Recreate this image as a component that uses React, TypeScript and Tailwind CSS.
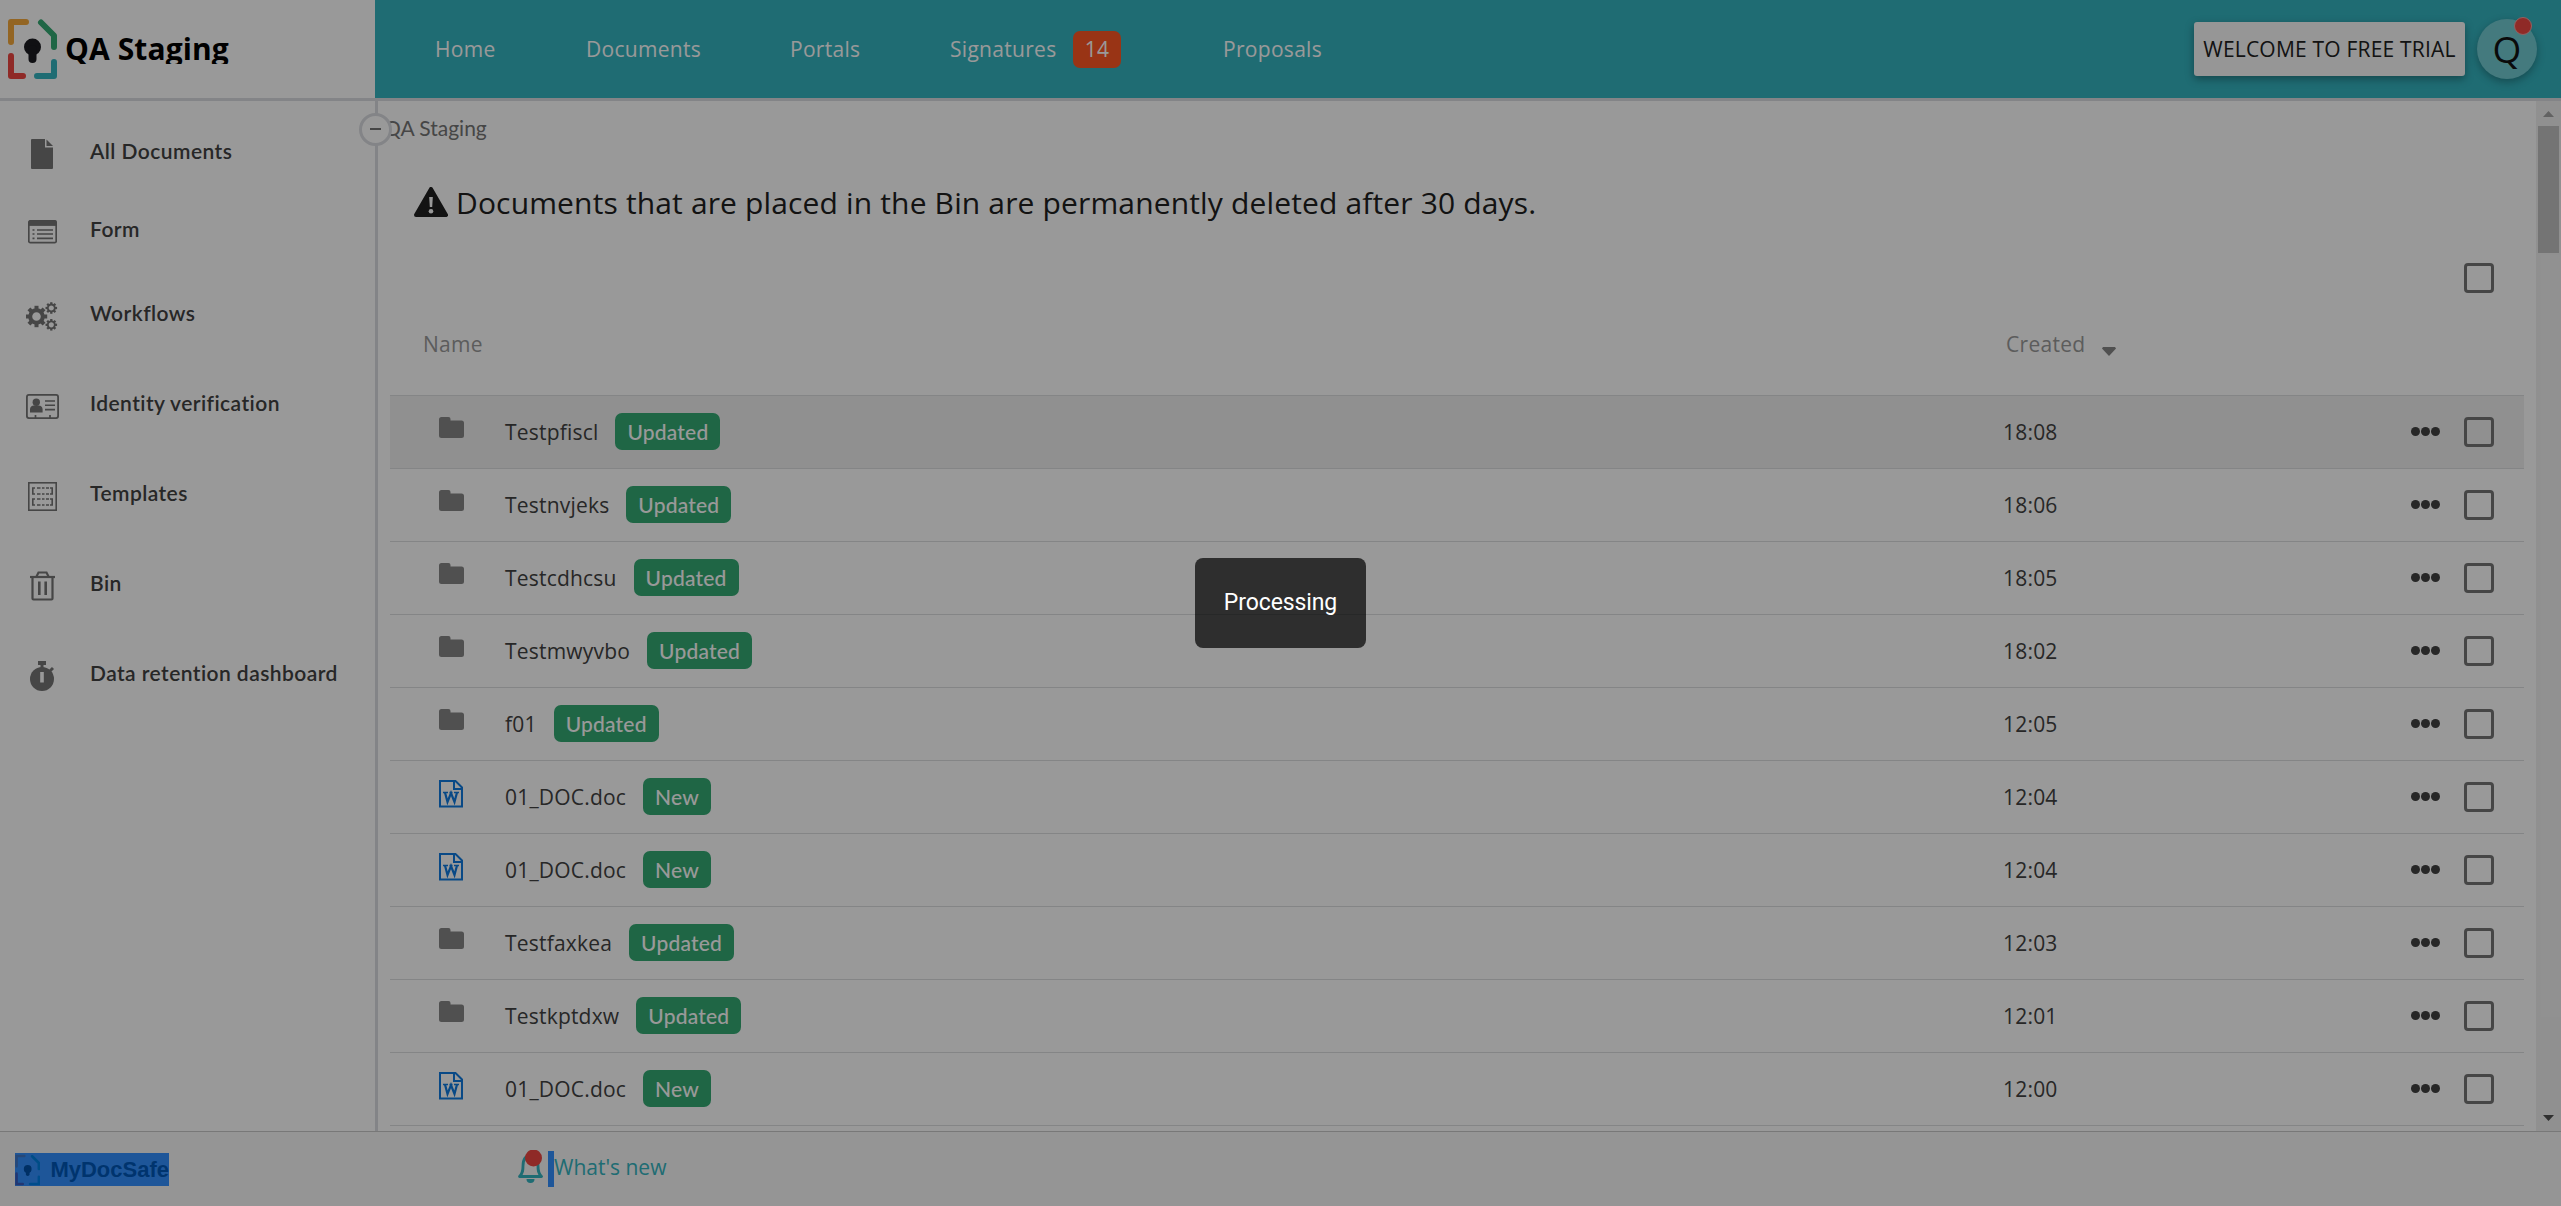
import type { ReactNode } from "react";

type Row = { kind: "folder" | "word"; name: string; tag: "Updated" | "New"; time: string };

const rows: Row[] = [
  { kind: "folder", name: "Testpfiscl", tag: "Updated", time: "18:08" },
  { kind: "folder", name: "Testnvjeks", tag: "Updated", time: "18:06" },
  { kind: "folder", name: "Testcdhcsu", tag: "Updated", time: "18:05" },
  { kind: "folder", name: "Testmwyvbo", tag: "Updated", time: "18:02" },
  { kind: "folder", name: "f01", tag: "Updated", time: "12:05" },
  { kind: "word", name: "01_DOC.doc", tag: "New", time: "12:04" },
  { kind: "word", name: "01_DOC.doc", tag: "New", time: "12:04" },
  { kind: "folder", name: "Testfaxkea", tag: "Updated", time: "12:03" },
  { kind: "folder", name: "Testkptdxw", tag: "Updated", time: "12:01" },
  { kind: "word", name: "01_DOC.doc", tag: "New", time: "12:00" },
];

function BrandMark({ className }: { className: string }) {
  return (
    <svg viewBox="0 0 49 60" className={className} fill="none" strokeWidth="6" strokeLinecap="round" strokeLinejoin="round">
      <path d="M3 23V3H18" stroke="#f5a93b" />
      <path d="M33 3.500L46 16.500V28" stroke="#34aa73" />
      <path d="M46 43V57H29" stroke="#34b4c0" />
      <path d="M3 37V57H15" stroke="#ee4641" />
      <circle cx="24.500" cy="28" r="8.500" fill="#1b1b20" />
      <path d="M24.500 30V40" stroke="#1b1b20" strokeWidth="8" />
    </svg>
  );
}

function FileIcon() {
  return (
    <svg viewBox="0 0 22 30" className="h-[30px] w-[22px]" fill="#757575">
      <path d="M1 0H14V8.500H22V29a1 1 0 0 1-1 1H1a1 1 0 0 1-1-1V1A1 1 0 0 1 1 0Z" />
      <path d="M15.500 0.500L22 7H15.500Z" />
    </svg>
  );
}

function FormIcon() {
  return (
    <svg viewBox="0 0 29 24" className="h-6 w-[29px]" fill="none" stroke="#757575">
      <rect x="0.800" y="0.800" width="27.400" height="21.900" rx="1.500" strokeWidth="1.700" />
      <path d="M1 3.400H28" strokeWidth="5" />
      <path d="M9 10H25M9 14H25M9 18.300H25" strokeWidth="1.700" />
      <path d="M4.500 10H6.500M4.500 14H6.500M4.500 18.300H6.500" strokeWidth="1.700" />
    </svg>
  );
}

function Gear({ cx, cy, r, teeth, hole, tooth }: { cx: number; cy: number; r: number; teeth: number; hole: number; tooth: number }) {
  return (
    <g transform={`translate(${cx} ${cy})`}>
      <circle r={(r + hole) / 2} fill="none" stroke="#757575" strokeWidth={r - hole} />
      {Array.from({ length: teeth }, (_, i) => (
        <rect key={i} x={-tooth / 2} y={-r - tooth * 0.6} width={tooth} height={tooth} fill="#757575" transform={`rotate(${(360 / teeth) * i})`} />
      ))}
    </g>
  );
}

function GearsIcon() {
  return (
    <svg viewBox="0 0 32 29" className="h-[29px] w-8">
      <Gear cx={10.500} cy={14.500} r={8.300} teeth={8} hole={4.300} tooth={4} />
      <Gear cx={25.300} cy={6} r={4.400} teeth={8} hole={2.600} tooth={2.300} />
      <Gear cx={25.300} cy={22.800} r={4.400} teeth={8} hole={2.600} tooth={2.300} />
    </svg>
  );
}

function IdIcon() {
  return (
    <svg viewBox="0 0 33 25" className="h-[25px] w-[33px]" fill="none" stroke="#757575">
      <rect x="0.900" y="0.900" width="31.200" height="23.200" rx="2" strokeWidth="1.800" />
      <circle cx="10.300" cy="8.300" r="3.700" fill="#757575" stroke="none" />
      <path d="M4 18.500V15a4 4 0 0 1 4-3.500h4.600a4 4 0 0 1 4 3.500v3.500Z" fill="#757575" stroke="none" />
      <path d="M19 7H29M19 11.300H29M19 15.600H29" strokeWidth="1.600" />
      <path d="M9.500 21V24M24 21V24" strokeWidth="1.700" />
    </svg>
  );
}

function TemplateIcon() {
  return (
    <svg viewBox="0 0 29 29" className="size-[29px]" fill="none" stroke="#757575">
      <rect x="0.800" y="0.800" width="27.400" height="27.400" strokeWidth="1.600" />
      <path d="M7 6H4.800V12H7M22 6H24.200V12H22M7 17H4.800V23H7M22 17H24.200V23H22" strokeWidth="1.600" />
      <path d="M9 6H12.500M14 6H16.500M18 6H21M9 12H12.500M14 12H16.500M18 12H21M9 17H12.500M14 17H16.500M18 17H21M9 23H12.500M14 23H16.500M18 23H21" strokeWidth="1.500" />
    </svg>
  );
}

function BinIcon() {
  return (
    <svg viewBox="0 0 25 30" className="h-[30px] w-[25px]" fill="none" stroke="#757575" strokeWidth="2.200">
      <path d="M0 6H25" />
      <path d="M6.500 5.500L8.500 1.500H16.500L18.500 5.500" />
      <path d="M2.500 6V27.500a1 1 0 0 0 1 1H21.500a1 1 0 0 0 1-1V6" />
      <path d="M9.300 10.500V24M15.700 10.500V24" strokeWidth="2.600" />
    </svg>
  );
}

function TimerIcon() {
  return (
    <svg viewBox="0 0 24 30" className="h-[30px] w-6">
      <circle cx="12" cy="18" r="12" fill="#757575" />
      <path d="M8 0H16V4H13.500V8H10.500V4H8Z" fill="#757575" />
      <path d="M19 11L23 7" stroke="#757575" strokeWidth="3" />
      <rect x="10.200" y="11" width="3.600" height="10.500" fill="#fff" />
    </svg>
  );
}

const sidebar: { label: string; icon: ReactNode; size: string }[] = [
  { label: "All Documents", icon: <FileIcon />, size: "h-[78px]" },
  { label: "Form", icon: <FormIcon />, size: "h-[84px]" },
  { label: "Workflows", icon: <GearsIcon />, size: "h-[90px]" },
  { label: "Identity verification", icon: <IdIcon />, size: "h-[90px]" },
  { label: "Templates", icon: <TemplateIcon />, size: "h-[90px]" },
  { label: "Bin", icon: <BinIcon />, size: "h-[90px]" },
  { label: "Data retention dashboard", icon: <TimerIcon />, size: "h-[90px]" },
];

function FolderIcon() {
  return (
    <svg viewBox="0 0 25 21" className="h-[21px] w-[25px]" fill="#868686">
      <path d="M2.500 0H9.500a2 2 0 0 1 2 2V3.500H22.500a2.500 2.500 0 0 1 2.500 2.500V18.500a2.500 2.500 0 0 1-2.500 2.500H2.500A2.500 2.500 0 0 1 0 18.500V2.500A2.500 2.500 0 0 1 2.500 0Z" />
    </svg>
  );
}

function WordIcon() {
  return (
    <svg viewBox="0 0 24 28" className="mt-[3px] mr-px h-7 w-6" fill="none" stroke="#0f7be0" strokeWidth="2">
      <path d="M1 1H16.500L23 7.500V26.500H1Z" />
      <path d="M15 1V9H23" />
      <path d="M4 12.500H9M15 12.500H20M10.500 12.500H13.500" strokeWidth="1.500" />
      <path d="M6 12.500L8.500 22L12 13L15.500 22L18 12.500" strokeWidth="2.200" />
    </svg>
  );
}

function Checkbox() {
  return <span className="block size-[30px] shrink-0 rounded-[4px] border-[3px] border-[#757575]" />;
}

function NavItem({ children, className }: { children: ReactNode; className: string }) {
  return <a className={`block shrink-0 whitespace-nowrap ${className}`}>{children}</a>;
}

export default function App() {
  return (
    <div className="relative flex h-[1206px] w-[2561px] flex-col overflow-hidden bg-white font-['Open_Sans',sans-serif] text-[21px] leading-[30px]">
      <header className="flex h-[101px] shrink-0 border-b-[3px] border-[#dbdce1]">
        <div className="flex w-[375px] items-center pl-2">
          <BrandMark className="h-[60px] w-[49px]" />
          <div className="ml-[8px] h-[30px] overflow-hidden text-[30px] leading-[30px] font-bold tracking-[0.1px] text-black">QA Staging</div>
        </div>
        <nav className="flex flex-1 items-center bg-[#34b4c0] pr-6 tracking-[0.3px] text-white">
          <NavItem className="ml-[60px] w-[151px]">Home</NavItem>
          <NavItem className="w-[204px]">Documents</NavItem>
          <NavItem className="w-[160px]">Portals</NavItem>
          <NavItem className="w-[123px]">Signatures</NavItem>
          <span className="flex h-[37px] w-12 items-center justify-center rounded-[7px] bg-[#ff5823]">14</span>
          <NavItem className="ml-[102px]">Proposals</NavItem>
          <button className="ml-auto h-[54px] w-[271px] rounded-[3px] bg-[#fafafa] tracking-[0.2px] whitespace-nowrap text-[#212121] shadow-[0_3px_8px_rgba(0,0,0,0.35)]">
            WELCOME TO FREE TRIAL
          </button>
          <div className="relative ml-3 flex size-[60px] items-center justify-center rounded-full bg-[#72cbd2] text-[37px] text-[#111] shadow-[0_3px_8px_rgba(0,0,0,0.3)]">
            Q
            <span className="absolute -top-[2px] right-[5px] size-[18px] rounded-full border border-[#f4a3a3] bg-[#ee4641]" />
          </div>
        </nav>
      </header>

      <div className="flex h-[1030px] shrink-0">
        <aside className="relative w-[378px] shrink-0 border-r-[3px] border-[#dbdce1] pt-[38px] font-[Lato,sans-serif] text-[21px] font-semibold tracking-[0.44px] text-[#424242]">
          {sidebar.map((item) => (
            <div key={item.label} className={`flex items-start ${item.size}`}>
              <span className="ml-[25px] flex h-[30px] w-[34px] items-center justify-center">{item.icon}</span>
              <span className="-mt-[3px] ml-[31px] whitespace-nowrap">{item.label}</span>
            </div>
          ))}
          <span className="absolute top-3 left-[359px] z-10 flex size-[33px] items-center justify-center rounded-full border-[3px] border-[#dbdce1] bg-white">
            <span className="mb-[2px] h-[2px] w-[11px] bg-[#757575]" />
          </span>
        </aside>

        <main className="min-w-0 flex-1 overflow-hidden pr-3 pl-3">
          <div className="-ml-[6px] mt-[12px] h-[32px] font-[Lato,sans-serif] text-[#757575]">QA Staging</div>
          <div className="mt-[36px] ml-6 flex h-11 items-center text-[#212121]">
            <svg viewBox="0 0 34 30" className="mb-[2px] h-[30px] w-[34px]">
              <path d="M17 2L32 28H2Z" fill="#212121" stroke="#212121" strokeWidth="4" strokeLinejoin="round" />
              <path d="M15.200 10H18.800L18.200 20H15.800Z" fill="#fff" />
              <circle cx="17" cy="24.300" r="2.300" fill="#fff" />
            </svg>
            <h1 className="ml-2 text-[30px] leading-[44px] tracking-[0.15px]">
              Documents that are placed in the Bin are permanently deleted after 30 days.
            </h1>
          </div>
          <div className="mt-[38px] mr-[30px] flex justify-end"><Checkbox /></div>
          <div className="mt-9 flex h-[66px] text-[#9a9a9a]">
            <span className="ml-[33px] w-[1583px] tracking-[0.3px]">Name</span>
            <span className="tracking-[0.3px]">Created</span>
            <svg viewBox="0 0 14 9" className="mt-[18px] ml-4 h-[9px] w-[14px]" fill="#868686"><path d="M1 0H13L14 1.500L7 9L0 1.500Z" /></svg>
          </div>
          <div className="w-[2134px] border-t border-[#dcdee0]">
            {rows.map((row, i) => (
              <div key={i} className={`flex h-[73px] items-center border-b border-[#dcdee0] pr-[30px] ${i === 0 ? "bg-[#f0f0f0]" : "bg-white"}`}>
                <span className="mb-[10px] ml-[48px] flex h-7 w-[27px] items-center justify-center">{row.kind === "folder" ? <FolderIcon /> : <WordIcon />}</span>
                <span className="ml-[40px] tracking-[0.2px] whitespace-nowrap text-[#424242]">{row.name}</span>
                <span className="mb-px ml-[17px] flex h-[37px] items-center rounded-[7px] bg-[#34aa73] px-[12px] font-[Lato,sans-serif] text-[21px] font-medium tracking-[0.2px] text-white">{row.tag}</span>
                <span className="ml-auto w-[408px] tracking-[0.2px] text-[#424242]">{row.time}</span>
                <span className="mr-[24px] mb-[2px] flex gap-px">
                  <i className="size-[9px] rounded-full bg-[#424242]" />
                  <i className="size-[9px] rounded-full bg-[#424242]" />
                  <i className="size-[9px] rounded-full bg-[#424242]" />
                </span>
                <Checkbox />
              </div>
            ))}
          </div>
        </main>

        <div className="flex w-[25px] shrink-0 flex-col items-center bg-[#f1f1f1]">
          <svg viewBox="0 0 11 6" className="mt-[10px] h-[6px] w-[11px]" fill="#a3a3a3"><path d="M5.500 0L11 6H0Z" /></svg>
          <div className="mt-[9px] h-[127px] w-[21px] bg-[#c1c1c1]" />
          <svg viewBox="0 0 11 6" className="mt-auto mb-[10px] h-[6px] w-[11px]" fill="#505050"><path d="M0 0H11L5.500 6Z" /></svg>
        </div>
      </div>

      <footer className="flex min-h-0 flex-1 items-start border-t border-[#c8c8c8] bg-[#f8f8f8]">
        <div className="mt-[21px] ml-[15px] flex h-[33px] w-[154px] items-center bg-[#3390ff] font-['Liberation_Sans',sans-serif] text-[22px] font-bold text-[#0058b8]">
          <svg viewBox="0 0 49 60" className="h-[32px] w-[27px]" fill="none" strokeWidth="5" strokeLinecap="round">
            <path d="M3 23V3H18" stroke="#4178c8" />
            <path d="M33 3.500L46 16.500V28" stroke="#0080e0" />
            <path d="M46 43V57H29" stroke="#0080e8" />
            <path d="M3 37V57H15" stroke="#3a5cbf" />
            <circle cx="24.500" cy="28" r="7.500" fill="#0050a8" />
            <path d="M24.500 30V38" stroke="#0050a8" strokeWidth="7" />
          </svg>
          <span className="mt-px ml-[10px]">MyDocSafe</span>
        </div>
        <div className="mt-[18px] ml-[349px] flex items-start">
          <svg viewBox="0 0 25 33" className="h-[33px] w-[25px]">
            <path d="M1.500 26.500C5 23 5 20 5 16C5 9 8 6 12.500 6C17 6 20 9 20 16C20 20 20 23 23.500 26.500Z" fill="none" stroke="#34b4c0" strokeWidth="2.800" strokeLinejoin="round" />
            <path d="M8.500 29H16.500A4 4 0 0 1 8.500 29Z" fill="#34b4c0" />
            <circle cx="15.500" cy="8" r="8.500" fill="#ee4641" />
          </svg>
          <span className="mt-px ml-[5px] h-9 w-[6px] bg-[#3390ff]" />
          <span className="mt-[2px] text-[#34b4c0]">What's new</span>
        </div>
      </footer>

      <div className="absolute inset-0 z-20 flex items-center justify-center bg-black/40">
        <div className="flex h-[90px] w-[171px] items-center justify-center rounded-[8px] bg-black/70 font-[Roboto,sans-serif] text-[23px] tracking-[-0.1px] text-white">Processing</div>
      </div>
    </div>
  );
}
